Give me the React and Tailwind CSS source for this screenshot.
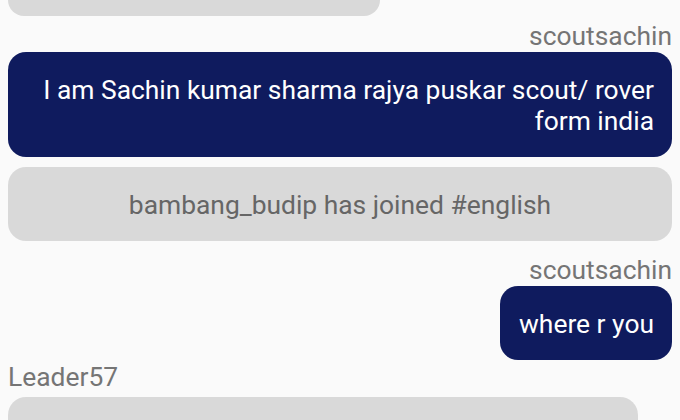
export default function App() {
  return (
    <div
      className="w-[680px] h-[420px] overflow-hidden bg-[#fafafa] px-2 flex flex-col text-[26.4px] leading-[31px]"
      style={{ fontFamily: "Roboto, 'Noto Sans', sans-serif" }}
    >
      {/* message cut off at the top */}
      <div className="shrink-0 w-[372px] h-[16px] bg-[#d9d9d9] rounded-b-[18px]" />

      <div className="shrink-0 mt-[5px] text-right text-[#757575]">scoutsachin</div>
      <div className="shrink-0 bg-[#0f1b5e] text-white text-right rounded-[18px] pl-[19px] pr-[18px] pt-[23px] pb-[20px]">
        I am Sachin kumar sharma rajya puskar scout/ rover form india
      </div>

      <div className="shrink-0 mt-[10px] bg-[#d9d9d9] text-[#666666] text-center rounded-[18px] px-[19px] pt-[23px] pb-[20px]">
        bambang_budip has joined #english
      </div>

      <div className="shrink-0 mt-[14px] text-right text-[#757575]">scoutsachin</div>
      <div className="shrink-0 self-end bg-[#0f1b5e] text-white rounded-[18px] pl-[19px] pr-[18px] pt-[23px] pb-[20px]">
        where r you
      </div>

      <div className="shrink-0 mt-[2px] text-[#757575]">Leader57</div>
      <div className="shrink-0 mt-[4px] w-[630px] h-[80px] bg-[#d9d9d9] rounded-[18px]" />
    </div>
  );
}
